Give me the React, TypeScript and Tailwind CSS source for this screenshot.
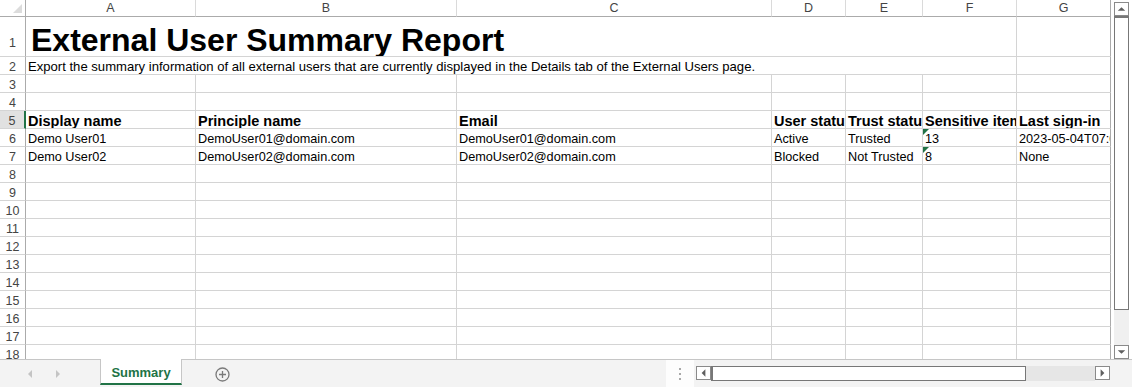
import React from 'react'

const cols = ['A', 'B', 'C', 'D', 'E', 'F', 'G']

const headers = ['Display name', 'Principle name', 'Email', 'User status', 'Trust status', 'Sensitive items', 'Last sign-in']

const users = [
  ['Demo User01', 'DemoUser01@domain.com', 'DemoUser01@domain.com', 'Active', 'Trusted', '13', '2023-05-04T07:09:37Z'],
  ['Demo User02', 'DemoUser02@domain.com', 'DemoUser02@domain.com', 'Blocked', 'Not Trusted', '8', 'None'],
]

function RowNum({ n, active = false, tall = false }: { n: number; active?: boolean; tall?: boolean }) {
  return (
    <div
      className={`flex items-end justify-center border-b border-b-[#d4d4d4] text-[12.5px] leading-[14px] text-[#444] ${
        active ? 'bg-[#e1e1e1] border-r-2 border-r-[#217346]' : 'border-r border-r-[#ababab]'
      } ${tall ? 'pb-[6px]' : ''}`}
    >
      {n}
    </div>
  )
}

function Cell({ children, bold = false, last = false, flag = false }: { children?: React.ReactNode; bold?: boolean; last?: boolean; flag?: boolean }) {
  return (
    <div
      className={`relative flex items-end overflow-hidden whitespace-nowrap border-b border-b-[#d4d4d4] border-r pl-[2px] leading-[14px] text-black ${
        last ? 'border-r-[#ababab]' : 'border-r-[#d4d4d4]'
      } ${bold ? 'font-bold text-[14.5px]' : 'text-[12.7px]'}`}
    >
      {flag && (
        <span className="absolute left-0 top-0 h-0 w-0 border-t-[6px] border-r-[6px] border-t-[#217346] border-r-transparent" />
      )}
      {children}
    </div>
  )
}

function ScrollBtn({ dir }: { dir: 'up' | 'down' | 'left' | 'right' }) {
  const pts = {
    up: '3,9 11,9 7,5',
    down: '3,5 11,5 7,9',
    left: '9,3 9,11 5,7',
    right: '5,3 5,11 9,7',
  }[dir]
  return (
    <div className="flex h-[14px] w-[15px] shrink-0 items-center justify-center border border-[#8a8a8a] bg-white">
      <svg width="14" height="14" viewBox="0 0 14 14">
        <polygon points={pts} fill="#5f5f5f" />
      </svg>
    </div>
  )
}

export default function App() {
  return (
    <div className="flex h-[387px] w-[1132px] flex-col overflow-hidden bg-white font-['Liberation_Sans',Arial,sans-serif]">
      <div className="flex h-[359px]">
        <div className="grid h-[359px] w-[1111px] grid-cols-[26px_170px_261px_315px_74px_77px_94px_94px] grid-rows-[17px_40px_repeat(17,18px)] content-start overflow-hidden">
          {/* corner */}
          <div className="relative border-b border-r border-b-[#ababab] border-r-[#ababab]">
            <span className="absolute bottom-[3px] right-[3px] h-0 w-0 border-b-[9px] border-l-[9px] border-b-[#dcdcdc] border-l-transparent" />
          </div>
          {cols.map((c, i) => (
            <div
              key={c}
              className={`flex items-center justify-center border-b border-r border-b-[#ababab] text-[12.5px] leading-[14px] text-[#444] ${
                i === 6 ? 'border-r-[#ababab]' : 'border-r-[#dadada]'
              }`}
            >
              {c}
            </div>
          ))}

          {/* row 1 */}
          <RowNum n={1} tall />
          <div className="col-span-6 flex items-end overflow-hidden whitespace-nowrap border-b border-r border-b-[#d4d4d4] border-r-[#d4d4d4] pl-[5px] text-[32px] font-bold leading-[32px] text-black">
            External User Summary Report
          </div>
          <Cell last />

          {/* row 2 */}
          <RowNum n={2} />
          <div className="col-span-6 flex items-end overflow-hidden whitespace-nowrap border-b border-r border-b-[#d4d4d4] border-r-[#d4d4d4] pl-[2px] text-[13.1px] leading-[14px] text-black">
            Export the summary information of all external users that are currently displayed in the Details tab of the External Users page.
          </div>
          <Cell last />

          {/* rows 3-4 */}
          {[3, 4].map((r) => (
            <React.Fragment key={r}>
              <RowNum n={r} />
              {cols.map((c, i) => (
                <Cell key={c} last={i === 6} />
              ))}
            </React.Fragment>
          ))}

          {/* row 5 headers */}
          <RowNum n={5} active />
          {headers.map((h, i) => (
            <Cell key={h} bold last={i === 6}>
              {h}
            </Cell>
          ))}

          {/* rows 6-7 */}
          {users.map((u, ri) => (
            <React.Fragment key={ri}>
              <RowNum n={6 + ri} />
              {u.map((v, i) => (
                <Cell key={i} last={i === 6} flag={i === 5}>
                  {v}
                </Cell>
              ))}
            </React.Fragment>
          ))}

          {/* empty rows */}
          {Array.from({ length: 11 }, (_, k) => 8 + k).map((r) => (
            <React.Fragment key={r}>
              <RowNum n={r} />
              {cols.map((c, i) => (
                <Cell key={c} last={i === 6} />
              ))}
            </React.Fragment>
          ))}
        </div>

        {/* vertical scrollbar */}
        <div className="flex w-[21px] flex-col pl-[3px] pr-[3px] pt-[2px]">
          <ScrollBtn dir="up" />
          <div className="h-[294px] border border-t-2 border-[#777] bg-white" />
          <div className="h-[35px] bg-[#f0f0f0]" />
          <ScrollBtn dir="down" />
        </div>
      </div>

      {/* sheet tabs */}
      <div className="flex h-[28px] items-start border-t border-t-[#c6c6c6] bg-[#f3f3f3]">
        <div className="flex h-[26px] w-[100px] items-center gap-[20px] pl-[26px] pt-[2px]">
          <svg width="8" height="10" viewBox="0 0 8 10">
            <polygon points="6,1 6,9 2,5" fill="#c4c4c4" />
          </svg>
          <svg width="8" height="10" viewBox="0 0 8 10">
            <polygon points="2,1 2,9 6,5" fill="#c4c4c4" />
          </svg>
        </div>
        <div className="-mt-px flex h-[26px] w-[82px] items-center justify-center border-x border-[#c6c6c6] border-b-2 border-b-[#217346] bg-white pt-[3px] text-[13px] font-bold text-[#217346]">
          Summary
        </div>
        <div className="flex h-[26px] items-center pl-[33px] pt-[2px]">
          <svg width="15" height="15" viewBox="0 0 15 15">
            <circle cx="7.5" cy="7.5" r="6.5" fill="none" stroke="#7a7a7a" strokeWidth="1.3" />
            <path d="M7.5 4v7M4 7.5h7" stroke="#7a7a7a" strokeWidth="1.3" />
          </svg>
        </div>
        <div className="flex-1" />
        <div className="flex h-[27px] w-[28px] items-center justify-center bg-[#fdfdfd]">
          <svg width="4" height="14" viewBox="0 0 4 14">
            <rect x="1" y="1" width="2" height="2" fill="#a8a8a8" />
            <rect x="1" y="6" width="2" height="2" fill="#a8a8a8" />
            <rect x="1" y="11" width="2" height="2" fill="#a8a8a8" />
          </svg>
        </div>
        <div className="ml-[2px] mt-[6px] flex h-[15px] w-[414px]">
          <ScrollBtn dir="left" />
          <div className="h-[15px] w-[315px] border border-l-2 border-[#777] bg-white" />
          <div className="h-[15px] flex-1 bg-[#e6e6e6]" />
          <ScrollBtn dir="right" />
        </div>
        <div className="w-[22px]" />
      </div>
    </div>
  )
}
